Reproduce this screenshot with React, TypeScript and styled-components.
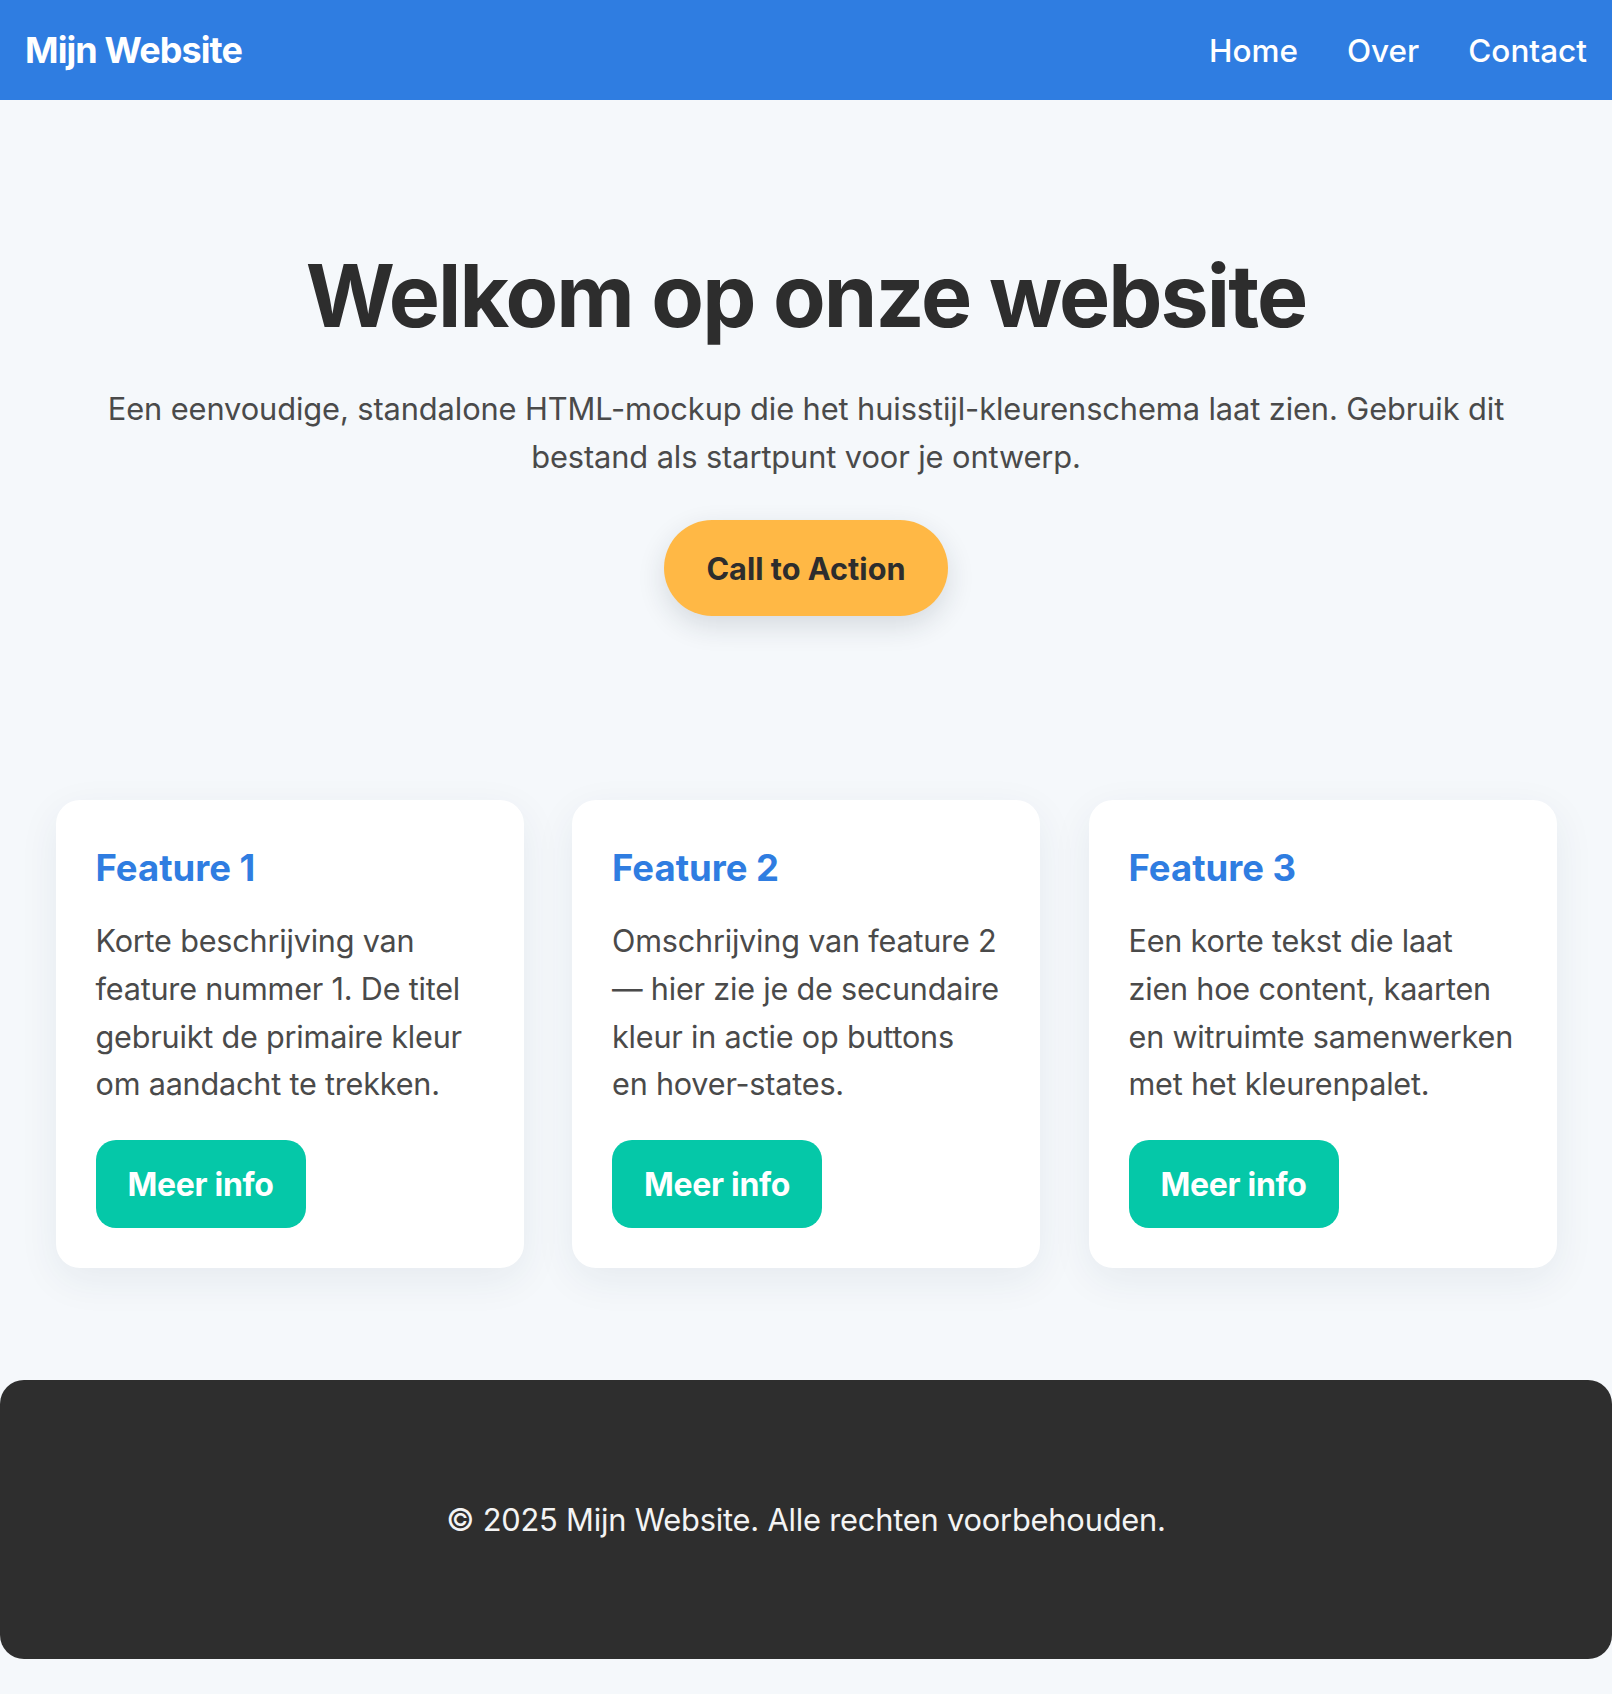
import styled, { createGlobalStyle } from "styled-components";

const GlobalStyle = createGlobalStyle`
  * {
    box-sizing: border-box;
  }
  body {
    margin: 0;
    background: #f5f8fb;
    font-family: Inter, "Noto Sans", "Liberation Sans", sans-serif;
    color: #2d2d2d;
  }
`;

const Header = styled.header`
  height: 100px;
  padding: 0 25px;
  background: #2f7de1;
  display: flex;
  align-items: center;
  justify-content: space-between;
`;

const Logo = styled.div`
  font-size: 36px;
  font-weight: 700;
  color: #ffffff;
  letter-spacing: -0.9px;
`;

const Nav = styled.nav`
  display: flex;
  gap: 49px;
`;

const NavLink = styled.a`
  font-size: 31.5px;
  font-weight: 500;
  color: #ffffff;
  text-decoration: none;
`;

const Hero = styled.section`
  padding: 145px 40px 184px;
  display: flex;
  flex-direction: column;
  align-items: center;
  text-align: center;
`;

const Title = styled.h1`
  margin: 0;
  font-size: 86px;
  line-height: 1.2;
  font-weight: 700;
  letter-spacing: -1.9px;
  color: #2d2d2d;
`;

const Lead = styled.p`
  margin: 37px 0 0;
  max-width: 1420px;
  font-size: 30.8px;
  line-height: 47.6px;
  color: #4a4a4a;
  letter-spacing: -0.1px;
`;

const CtaButton = styled.button`
  margin-top: 40px;
  height: 96px;
  padding: 0 42px;
  border: none;
  border-radius: 48px;
  background: #ffb845;
  color: #2d2d2d;
  font-family: inherit;
  font-size: 30.7px;
  font-weight: 700;
  box-shadow: 0 10px 28px rgba(30, 40, 60, 0.14);
  cursor: pointer;
`;

const Features = styled.section`
  padding: 0 55.5px;
  display: grid;
  grid-template-columns: repeat(3, minmax(0, 1fr));
  gap: 48.5px;
`;

const Card = styled.article`
  height: 468px;
  padding: 47px 40px 40px;
  background: #ffffff;
  border-radius: 24px;
  box-shadow: 0 12px 40px rgba(30, 50, 90, 0.07);
  display: flex;
  flex-direction: column;
  align-items: flex-start;
`;

const CardTitle = styled.h3`
  margin: 0;
  font-size: 36.5px;
  line-height: 42px;
  font-weight: 700;
  color: #2f7de1;
`;

const CardText = styled.p`
  margin: 28px 0 0;
  font-size: 30.6px;
  line-height: 47.7px;
  color: #4a4a4a;
  letter-spacing: -0.2px;
`;

const TextLine = styled.span`
  display: block;
  white-space: nowrap;
`;

const InfoButton = styled.button`
  flex-shrink: 0;
  margin-top: 32px;
  height: 88px;
  padding: 0 32px;
  border: none;
  border-radius: 20px;
  background: #05c8a8;
  color: #ffffff;
  font-family: inherit;
  font-size: 32px;
  font-weight: 700;
  letter-spacing: -0.3px;
  cursor: pointer;
`;

const Footer = styled.footer`
  margin-top: 112px;
  height: 279px;
  border-radius: 24px;
  background: #2e2e2e;
  display: flex;
  align-items: center;
  justify-content: center;
`;

const FooterText = styled.p`
  margin: 0;
  font-size: 30.8px;
  color: #f4f4f4;
  letter-spacing: -0.2px;
`;

// regels staan vast, zodat de tekst breekt zoals in het ontwerp
const features = [
  {
    title: "Feature 1",
    lines: [
      "Korte beschrijving van",
      "feature nummer 1. De titel",
      "gebruikt de primaire kleur",
      "om aandacht te trekken.",
    ],
  },
  {
    title: "Feature 2",
    lines: [
      "Omschrijving van feature 2",
      "— hier zie je de secundaire",
      "kleur in actie op buttons",
      "en hover-states.",
    ],
  },
  {
    title: "Feature 3",
    lines: [
      "Een korte tekst die laat",
      "zien hoe content, kaarten",
      "en witruimte samenwerken",
      "met het kleurenpalet.",
    ],
  },
];

const App = () => {
  return (
    <>
      <GlobalStyle />
      <Header>
        <Logo>Mijn Website</Logo>
        <Nav>
          <NavLink href="#">Home</NavLink>
          <NavLink href="#">Over</NavLink>
          <NavLink href="#">Contact</NavLink>
        </Nav>
      </Header>
      <Hero>
        <Title>Welkom op onze website</Title>
        <Lead>
          Een eenvoudige, standalone HTML-mockup die het huisstijl-kleurenschema
          laat zien. Gebruik dit bestand als startpunt voor je ontwerp.
        </Lead>
        <CtaButton>Call to Action</CtaButton>
      </Hero>
      <Features>
        {features.map((f) => (
          <Card key={f.title}>
            <CardTitle>{f.title}</CardTitle>
            <CardText>
              {f.lines.map((line) => (
                <TextLine key={line}>{line}</TextLine>
              ))}
            </CardText>
            <InfoButton>Meer info</InfoButton>
          </Card>
        ))}
      </Features>
      <Footer>
        <FooterText>© 2025 Mijn Website. Alle rechten voorbehouden.</FooterText>
      </Footer>
    </>
  );
};

export default App;
